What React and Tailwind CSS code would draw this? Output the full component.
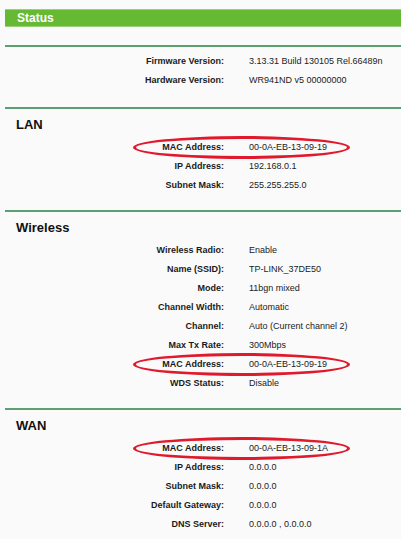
import React from "react";

const sections = [
  {
    title: null,
    rows: [
      ["Firmware Version:", "3.13.31 Build 130105 Rel.66489n"],
      ["Hardware Version:", "WR941ND v5 00000000"],
    ],
  },
  {
    title: "LAN",
    rows: [
      ["MAC Address:", "00-0A-EB-13-09-19", true],
      ["IP Address:", "192.168.0.1"],
      ["Subnet Mask:", "255.255.255.0"],
    ],
  },
  {
    title: "Wireless",
    rows: [
      ["Wireless Radio:", "Enable"],
      ["Name (SSID):", "TP-LINK_37DE50"],
      ["Mode:", "11bgn mixed"],
      ["Channel Width:", "Automatic"],
      ["Channel:", "Auto (Current channel 2)"],
      ["Max Tx Rate:", "300Mbps"],
      ["MAC Address:", "00-0A-EB-13-09-19", true],
      ["WDS Status:", "Disable"],
    ],
  },
  {
    title: "WAN",
    rows: [
      ["MAC Address:", "00-0A-EB-13-09-1A", true],
      ["IP Address:", "0.0.0.0"],
      ["Subnet Mask:", "0.0.0.0"],
      ["Default Gateway:", "0.0.0.0"],
      ["DNS Server:", "0.0.0.0 , 0.0.0.0"],
    ],
  },
];

function Row({ label, value, marked }) {
  return (
    <div className="relative flex h-[19px] items-center whitespace-nowrap text-[9px] leading-none">
      <div className="w-[219px] text-right font-bold text-[#1a1a1a]">{label}</div>
      <div className="pl-[25px] text-[#222]">{value}</div>
      {marked && (
        <div className="pointer-events-none absolute left-[128px] top-[-2px] h-[23px] w-[217px] rounded-[50%] border-[3px] border-[#e01a2c]" />
      )}
    </div>
  );
}

function Section({ title, rows, first }) {
  return (
    <div className="ml-[5px] border-t-2 border-[#5d9f72]">
      {title ? (
        <div className="pt-[8px] pb-[5px]">
          <div className="h-[16px] pl-[11px] text-[13px] font-bold leading-[16px] text-[#111]">{title}</div>
        </div>
      ) : (
        <div className="h-[5px]" />
      )}
      <div className={first ? "pb-[17px]" : "pb-[15px]"}>
        {rows.map((r, i) => (
          <Row key={i} label={r[0]} value={r[1]} marked={r[2]} />
        ))}
      </div>
    </div>
  );
}

export default function App() {
  return (
    <div
      className="h-[539px] w-[401px] overflow-hidden bg-[#fafafa] pt-[9px]"
      style={{ fontFamily: '"Liberation Sans", Arial, sans-serif' }}
    >
      <div className="ml-[5px] flex h-[18px] items-center border-y border-[#9bd07a] bg-[#66b933] pl-[12px] text-[12px] font-bold text-white">
        Status
      </div>
      <div className="h-[18px]" />
      {sections.map((s, i) => (
        <Section key={i} title={s.title} rows={s.rows} first={i === 0} />
      ))}
    </div>
  );
}
